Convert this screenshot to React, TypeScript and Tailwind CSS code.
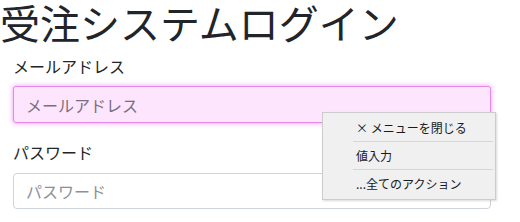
import React from 'react';

const jp = { fontFamily: '"Noto Sans CJK JP", "Noto Sans", sans-serif' };

function ContextMenu() {
  const items = ['× メニューを閉じる', '値入力', '...全てのアクション'];
  return (
    <div className="absolute left-[322px] top-[112px] w-[174px] bg-[#f0f0f0] border border-[#cccccc] shadow-[1px_1px_2px_rgba(0,0,0,0.15)] py-[1px]">
      {items.map((label, i) => (
        <div key={label} className="flex h-[28px]">
          <div className="w-[30px] shrink-0" />
          <div
            className={
              'flex flex-1 items-center pl-[3px] mr-[2px] text-[12px] text-[#1a1a1a] ' +
              (i < items.length - 1 ? 'border-b border-[#d6d6d6]' : '')
            }
          >
            {label}
          </div>
        </div>
      ))}
    </div>
  );
}

export default function App() {
  return (
    <div className="relative w-[520px] h-[222px] bg-white overflow-hidden text-[#212529]" style={jp}>
      <h1 className="text-[40px] leading-[44px] font-normal">受注システムログイン</h1>
      <div className="pl-[13px] pr-[29px]">
        <label className="block mt-[10px] text-[16px] leading-[24px]">メールアドレス</label>
        <input
          className="mt-[8px] block w-full h-[37px] px-[12px] text-[16px] bg-[#fde6fd] border border-[#e28ae8] rounded-[3px] shadow-[0_0_4px_1px_rgba(240,130,250,0.6)] outline-none placeholder:text-[#7a6f80]"
          placeholder="メールアドレス"
        />
        <label className="block mt-[17px] text-[16px] leading-[24px]">パスワード</label>
        <input
          className="mt-[9px] block w-full h-[36px] px-[12px] text-[16px] bg-white border border-[#ced4da] rounded-[4px] outline-none placeholder:text-[#8a9097]"
          placeholder="パスワード"
          type="text"
        />
      </div>
      <ContextMenu />
    </div>
  );
}
